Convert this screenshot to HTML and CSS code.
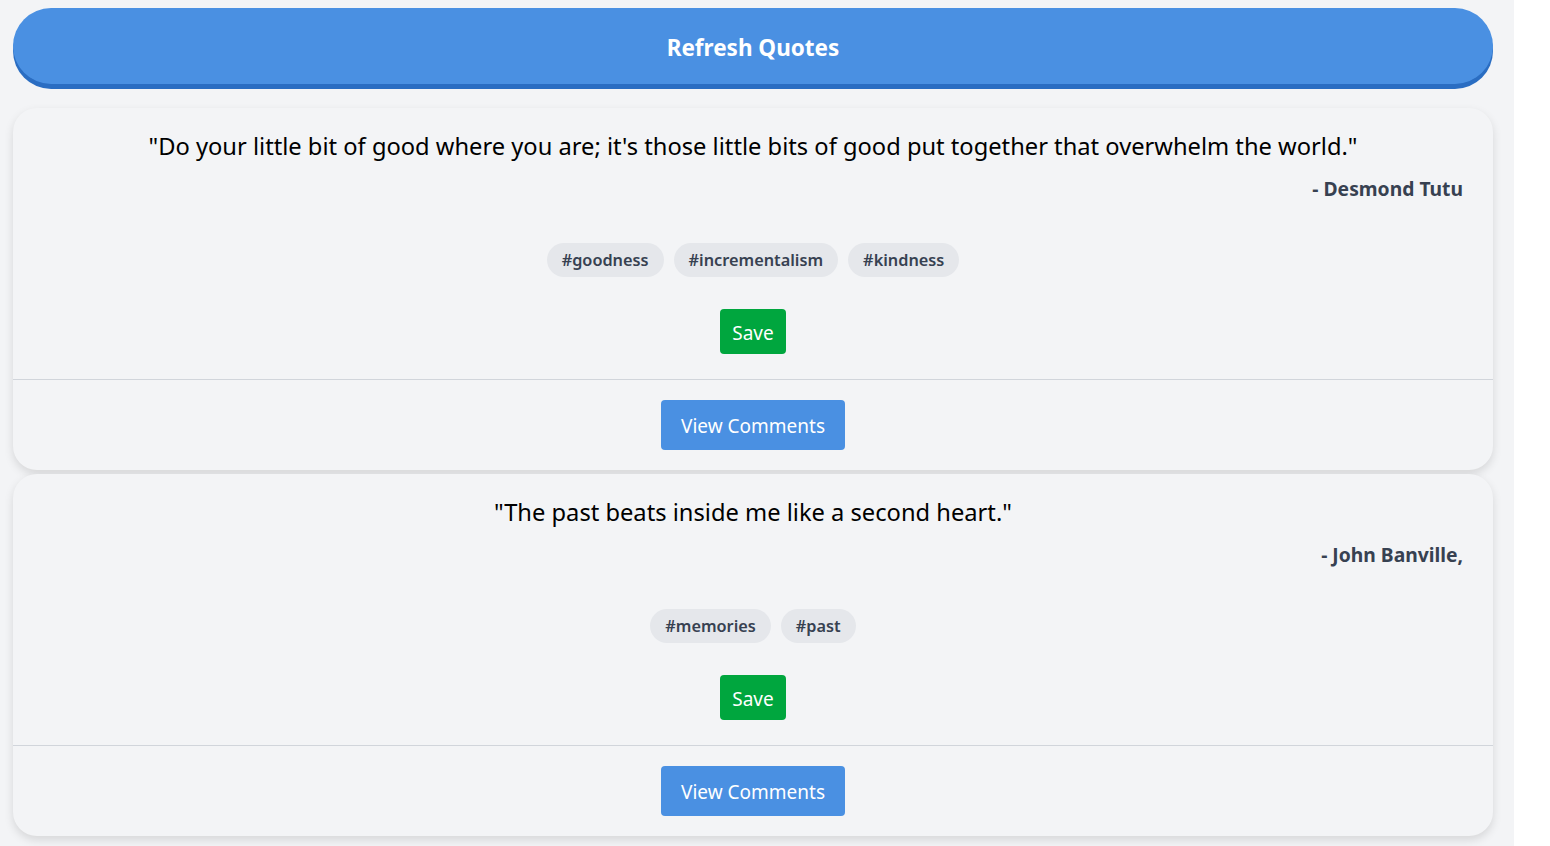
FILE: index.html
```html
<!DOCTYPE html>
<html>
<head>
<meta charset="utf-8">
<link rel="stylesheet" href="styles.css">
</head>
<body>
<div class="page">
  <button class="refresh">Refresh Quotes</button>
  <div class="card">
    <div class="card-main">
      <p class="quote">"Do your little bit of good where you are; it's those little bits of good put together that overwhelm the world."</p>
      <p class="author">- Desmond Tutu</p>
      <div class="tags">
        <span class="tag">#goodness</span>
        <span class="tag">#incrementalism</span>
        <span class="tag">#kindness</span>
      </div>
      <button class="save">Save</button>
    </div>
    <div class="card-foot">
      <button class="comments">View Comments</button>
    </div>
  </div>
  <div class="card">
    <div class="card-main">
      <p class="quote">"The past beats inside me like a second heart."</p>
      <p class="author">- John Banville,</p>
      <div class="tags">
        <span class="tag">#memories</span>
        <span class="tag">#past</span>
      </div>
      <button class="save">Save</button>
    </div>
    <div class="card-foot">
      <button class="comments">View Comments</button>
    </div>
  </div>
</div>
</body>
</html>
```
FILE: styles.css
```css
html, body {
  margin: 0;
  padding: 0;
  background: #ffffff;
}
body {
  font-family: "Noto Sans", "Open Sans", sans-serif;
}
.page {
  width: 1514px;
  min-height: 846px;
  box-sizing: border-box;
  background: #f3f4f6;
  padding: 8px 21px 0 13px;
  overflow: hidden;
}
button {
  font-family: inherit;
  border: none;
  cursor: pointer;
}
.refresh {
  display: block;
  width: 100%;
  height: 76px;
  padding-top: 4px;
  border-radius: 40px;
  background: #4a90e2;
  color: #ffffff;
  font-size: 22.5px;
  font-weight: 700;
  box-shadow: 0 5px 0 #2a6dc2;
  margin-bottom: 24px;
}
.card {
  background: #f3f4f6;
  border-radius: 24px;
  box-shadow: 0 4px 10px rgba(0, 0, 0, 0.12);
  margin-bottom: 4px;
}
.card-main {
  padding: 20px 30px 25px;
  display: flex;
  flex-direction: column;
  align-items: center;
  border-bottom: 1px solid #d1d5db;
}
.quote {
  margin: 0;
  font-size: 23.7px;
  line-height: 36px;
  color: #000000;
  text-align: center;
}
.author {
  margin: 11px 0 0;
  align-self: stretch;
  text-align: right;
  font-size: 19.3px;
  line-height: 28px;
  font-weight: 700;
  color: #374151;
}
.tags {
  display: flex;
  gap: 10px;
  margin-top: 40px;
}
.tag {
  background: #e5e7eb;
  color: #374151;
  font-size: 16.3px;
  font-weight: 600;
  height: 34px;
  line-height: 34px;
  padding: 0 15px;
  border-radius: 17px;
}
.save {
  margin-top: 32px;
  width: 66px;
  height: 45px;
  padding-top: 3px;
  background: #00a63e;
  color: #ffffff;
  font-size: 19px;
  border-radius: 4px;
}
.card-foot {
  padding: 20px 0 20px;
  display: flex;
  justify-content: center;
}
.comments {
  width: 184px;
  height: 50px;
  padding-top: 3px;
  background: #4a90e2;
  color: #ffffff;
  font-size: 19px;
  border-radius: 4px;
}
```
